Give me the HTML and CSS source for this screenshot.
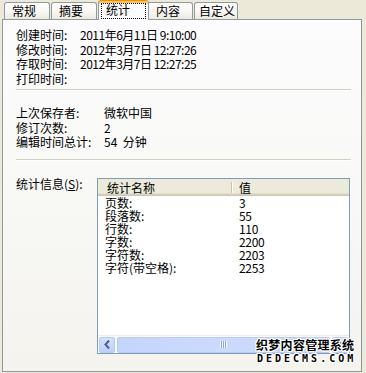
FILE: index.html
```html
<!DOCTYPE html>
<html lang="zh-CN">
<head>
<meta charset="utf-8">
<title>统计</title>
<link rel="stylesheet" href="styles.css">
</head>
<body>
<div class="dialog">
  <div class="tabs">
    <div class="tab t1">常规</div>
    <div class="tab t2">摘要</div>
    <div class="tab active"><span class="focus">统计</span></div>
    <div class="tab t4">内容</div>
    <div class="tab t5">自定义</div>
  </div>
  <div class="panel">
    <div class="group g1">
      <div class="row"><span class="lbl">创建时间:</span><span class="val">2011年6月11日 9:10:00</span></div>
      <div class="row"><span class="lbl">修改时间:</span><span class="val">2012年3月7日 12:27:26</span></div>
      <div class="row"><span class="lbl">存取时间:</span><span class="val">2012年3月7日 12:27:25</span></div>
      <div class="row"><span class="lbl">打印时间:</span><span class="val"></span></div>
    </div>
    <div class="sep"></div>
    <div class="group g2">
      <div class="row"><span class="lbl">上次保存者:</span><span>微软中国</span></div>
      <div class="row"><span class="lbl">修订次数:</span><span>2</span></div>
      <div class="row"><span class="lbl">编辑时间总计:</span><span>54&nbsp; 分钟</span></div>
    </div>
    <div class="sep sep2"></div>
    <div class="stats">
      <div class="stats-label">统计信息(<u>S</u>):</div>
      <div class="listview">
        <div class="lv-head">
          <div class="hc1">统计名称</div>
          <div class="hdiv"></div>
          <div class="hc2">值</div>
        </div>
        <div class="lv-body">
          <div class="lv-row"><span class="c1">页数:</span><span class="c2">3</span></div>
          <div class="lv-row"><span class="c1">段落数:</span><span class="c2">55</span></div>
          <div class="lv-row"><span class="c1">行数:</span><span class="c2">110</span></div>
          <div class="lv-row"><span class="c1">字数:</span><span class="c2">2200</span></div>
          <div class="lv-row"><span class="c1">字符数:</span><span class="c2">2203</span></div>
          <div class="lv-row"><span class="c1">字符(带空格):</span><span class="c2">2253</span></div>
        </div>
        <div class="hscroll">
          <div class="sbtn">
            <svg width="8" height="9" viewBox="0 0 8 9"><path d="M6 0.5 L2.5 4.5 L6 8.5" fill="none" stroke="#4d6185" stroke-width="2"/></svg>
          </div>
          <div class="thumb"><span class="grip"></span></div>
          <div class="sbtn">
            <svg width="8" height="9" viewBox="0 0 8 9"><path d="M2 0.5 L5.5 4.5 L2 8.5" fill="none" stroke="#4d6185" stroke-width="2"/></svg>
          </div>
        </div>
      </div>
    </div>
  </div>
  <div class="watermark">
    <div class="wm1">织梦内容管理系统</div>
    <div class="wm2">DEDECMS.COM</div>
  </div>
</div>
</body>
</html>
```
FILE: styles.css
```css
html, body {
  margin: 0;
  padding: 0;
}
body {
  background: #ece9d8;
  font-family: "Noto Sans CJK SC", "Noto Sans", sans-serif;
  font-size: 12px;
  color: #000;
  width: 366px;
  height: 373px;
  overflow: hidden;
}
.dialog {
  position: relative;
  width: 366px;
  height: 373px;
}
.tabs {
  display: flex;
  align-items: flex-end;
  height: 19px;
  padding-left: 4px;
  position: relative;
  z-index: 2;
}
.tab {
  box-sizing: border-box;
  height: 17px;
  width: 46px;
  border: 1px solid #919b9c;
  border-bottom: none;
  border-radius: 3px 3px 0 0;
  background: linear-gradient(#ffffff, #f8f7f3 55%, #ebe9e0);
  padding-left: 7px;
  line-height: 15px;
  margin-right: 1px;
  white-space: nowrap;
}
.tab.active {
  width: 51px;
  height: 20px;
  margin-bottom: -1px;
  margin-right: -2px;
  padding-left: 0;
  background: #fcfcfe;
  border-top: 1px solid #e68b2c;
  box-shadow: inset 0 2px 0 #ffc83c;
  position: relative;
  z-index: 3;
}
.focus {
  display: block;
  box-sizing: border-box;
  margin: 2px 2px 0 2px;
  height: 16px;
  padding-left: 5px;
  line-height: 14px;
  outline: 1px dotted #000;
  outline-offset: -1px;
}
.tab.t4 {
  width: 46px;
  padding-left: 8px;
}
.tab.t5 {
  width: 44px;
  padding-left: 4px;
}
.panel {
  box-sizing: border-box;
  margin-left: 2px;
  width: 360px;
  height: 353px;
  border: 1px solid #919b9c;
  border-right-color: #8c9697;
  background: linear-gradient(#fcfcfe, #f9f9f7 40%, #f4f3ee);
  padding: 8px 10px 0 13px;
}
.row {
  display: flex;
  height: 14.5px;
  line-height: 14.5px;
  white-space: nowrap;
}
.val {
  letter-spacing: -0.5px;
}
.g1 .lbl {
  width: 64px;
}
.g2 .lbl {
  width: 88px;
}
.sep {
  margin-top: 3px;
  border-top: 1px solid #d0d0bf;
  border-bottom: 1px solid #ffffff;
}
.g2 {
  margin-top: 15px;
}
.sep2 {
  margin-top: 9.5px;
}
.stats {
  display: flex;
  margin-top: 17px;
}
.stats-label {
  width: 81px;
  line-height: 14.5px;
  margin-top: -1px;
  white-space: nowrap;
}
.stats-label u {
  text-decoration: underline;
}
.listview {
  box-sizing: border-box;
  width: 253px;
  height: 176px;
  border: 1px solid #7f9db9;
  background: #ffffff;
  display: flex;
  flex-direction: column;
}
.lv-head {
  display: flex;
  align-items: center;
  height: 17px;
  flex: none;
  background: #ebeadb;
  box-shadow: inset 0 -1px 0 #cbc7b8, inset 0 -2px 0 #d6d2c2, inset 0 -3px 0 #e2dec6;
  line-height: 15px;
}
.hc1 {
  width: 133px;
  box-sizing: border-box;
  padding-left: 9px;
}
.hdiv {
  width: 1px;
  height: 11px;
  background: #c7c5b2;
  box-shadow: 1px 0 0 #ffffff;
  margin-bottom: 1px;
}
.hc2 {
  padding-left: 7px;
}
.lv-body {
  flex: 1;
}
.lv-row {
  display: flex;
  height: 13px;
  line-height: 13px;
  white-space: nowrap;
}
.c1 {
  width: 134px;
  box-sizing: border-box;
  padding-left: 7px;
}
.c2 {
  padding-left: 7px;
  letter-spacing: -0.3px;
}
.hscroll {
  flex: none;
  box-sizing: border-box;
  height: 18px;
  border-top: 1px solid #eeede5;
  background: #fafaf7;
  display: flex;
  align-items: center;
  gap: 2px;
  padding: 0 1px;
}
.sbtn {
  box-sizing: border-box;
  width: 16px;
  height: 16px;
  border: 1px solid #b9cbf3;
  border-radius: 2px;
  background: linear-gradient(#d2dffd, #bcd0fb);
  display: flex;
  align-items: center;
  justify-content: center;
}
.thumb {
  flex: 1;
  box-sizing: border-box;
  height: 16px;
  border: 1px solid #b8caf5;
  border-radius: 2px;
  background: linear-gradient(90deg, #c4d5fc, #cddafc 50%, #c4d5fc);
  display: flex;
  align-items: center;
  justify-content: center;
}
.grip {
  width: 7px;
  height: 7px;
  background: repeating-linear-gradient(90deg, #eef3fe 0 1px, #8fa9e6 1px 2px);
}
.watermark {
  position: absolute;
  left: 256px;
  top: 337px;
  z-index: 5;
  color: #000;
  white-space: nowrap;
}
.wm1 {
  font-family: "Noto Sans CJK SC", sans-serif;
  font-weight: bold;
  font-size: 12px;
  line-height: 16px;
  letter-spacing: 0.3px;
  text-shadow: 1px 0 0 #fff, -1px 0 0 #fff, 0 1px 0 #fff, 0 -1px 0 #fff, 1px 1px 0 #fff, -1px -1px 0 #fff, 1px -1px 0 #fff, -1px 1px 0 #fff;
}
.wm2 {
  font-family: "DejaVu Sans Mono", monospace;
  font-weight: bold;
  font-size: 10px;
  line-height: 11px;
  letter-spacing: 3px;
  padding-left: 1px;
  text-shadow: 1px 0 0 #fff, -1px 0 0 #fff, 0 1px 0 #fff, 0 -1px 0 #fff, 1px 1px 0 #fff, -1px -1px 0 #fff, 1px -1px 0 #fff, -1px 1px 0 #fff;
}
```
